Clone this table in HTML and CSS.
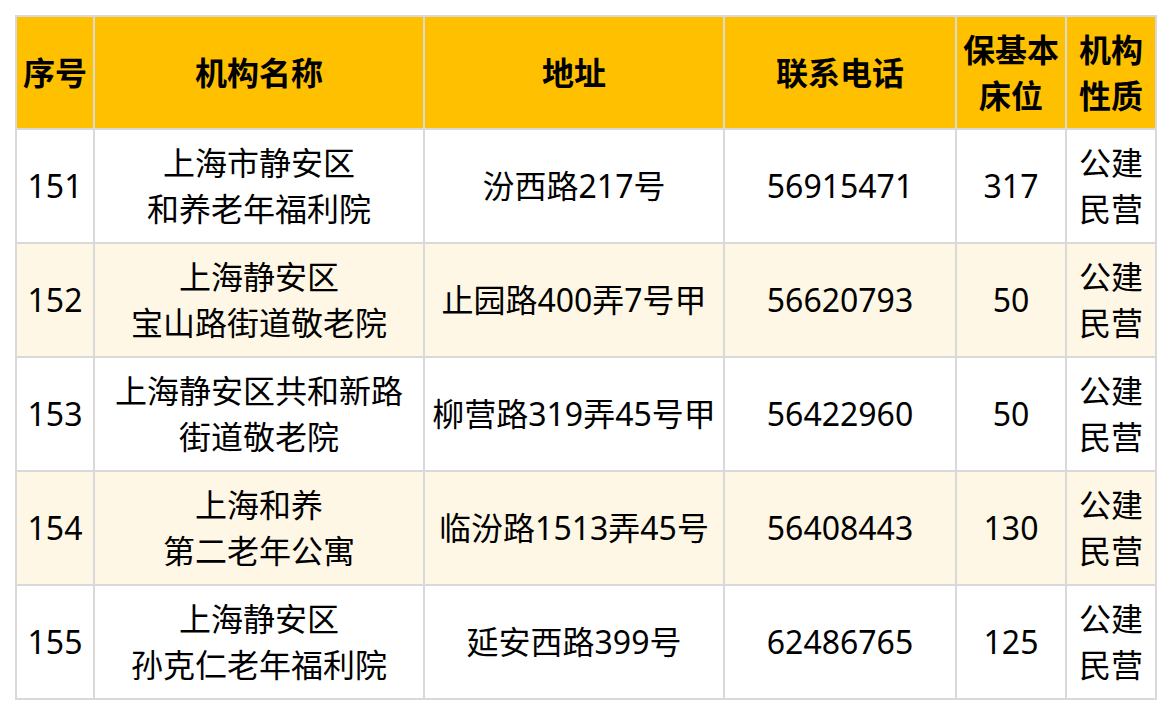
FILE: index.html
```html
<!DOCTYPE html>
<html lang="zh-CN">
<head>
<meta charset="utf-8">
<title>养老机构</title>
<link rel="stylesheet" href="styles.css">
</head>
<body>
<div class="sheet">
  <div class="cell head">序号</div>
  <div class="cell head">机构名称</div>
  <div class="cell head">地址</div>
  <div class="cell head">联系电话</div>
  <div class="cell head">保基本床位</div>
  <div class="cell head">机构性质</div>

  <div class="cell">151</div>
  <div class="cell">上海市静安区<br>和养老年福利院</div>
  <div class="cell">汾西路217号</div>
  <div class="cell">56915471</div>
  <div class="cell">317</div>
  <div class="cell">公建民营</div>

  <div class="cell alt">152</div>
  <div class="cell alt">上海静安区<br>宝山路街道敬老院</div>
  <div class="cell alt">止园路400弄7号甲</div>
  <div class="cell alt">56620793</div>
  <div class="cell alt">50</div>
  <div class="cell alt">公建民营</div>

  <div class="cell">153</div>
  <div class="cell">上海静安区共和新路<br>街道敬老院</div>
  <div class="cell">柳营路319弄45号甲</div>
  <div class="cell">56422960</div>
  <div class="cell">50</div>
  <div class="cell">公建民营</div>

  <div class="cell alt">154</div>
  <div class="cell alt">上海和养<br>第二老年公寓</div>
  <div class="cell alt">临汾路1513弄45号</div>
  <div class="cell alt">56408443</div>
  <div class="cell alt">130</div>
  <div class="cell alt">公建民营</div>

  <div class="cell">155</div>
  <div class="cell">上海静安区<br>孙克仁老年福利院</div>
  <div class="cell">延安西路399号</div>
  <div class="cell">62486765</div>
  <div class="cell">125</div>
  <div class="cell">公建民营</div>
</div>
</body>
</html>
```

FILE: styles.css
```css
html, body {
  margin: 0;
  padding: 0;
  background: #ffffff;
}

body {
  padding: 15px 0 0 15px;
  font-family: "Noto Sans", "Noto Sans CJK SC", sans-serif;
  color: #000000;
}

.sheet {
  display: grid;
  grid-template-columns: 76px 328px 298px 230px 108px 88px;
  grid-template-rows: 111px repeat(5, 112px);
  gap: 2px;
  padding: 2px;
  background: #d9d9d9;
  width: max-content;
}

.cell {
  display: flex;
  align-items: center;
  justify-content: center;
  text-align: center;
  background: #ffffff;
  font-size: 32px;
  line-height: 46px;
  padding: 0 2px;
  word-break: break-all;
}

.cell.alt {
  background: #fff7e6;
}

.cell.head {
  background: #ffc000;
  font-weight: 700;
}
```
